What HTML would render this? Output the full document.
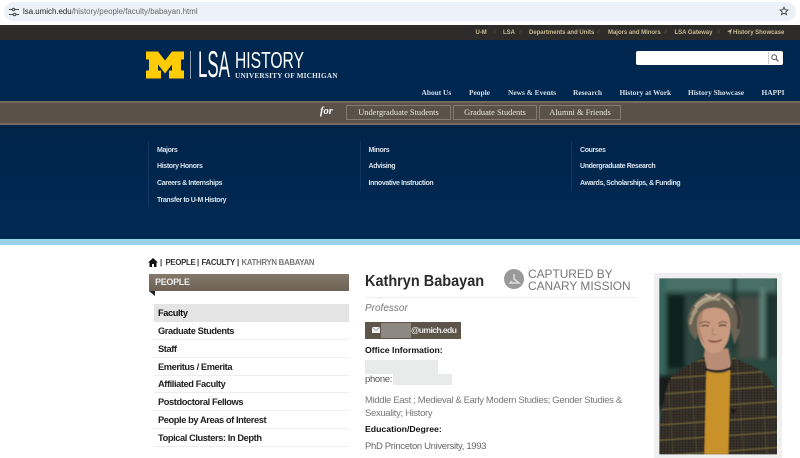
<!DOCTYPE html>
<html><head><meta charset="utf-8"><title>Kathryn Babayan</title>
<style>
html,body{margin:0;padding:0;background:#fff}
#p{position:relative;width:800px;height:458px;overflow:hidden;background:#fff;font-family:"Liberation Sans",sans-serif}
#p div,#p span.a,#p svg{position:absolute}
.t{white-space:nowrap;line-height:1}
.top{font-size:6px;font-weight:bold;color:#c9bb94;top:29.500px;letter-spacing:-.02px}
.sl{font-size:6px;color:#55534f;top:29.500px}
.nav{font-family:"Liberation Serif",serif;font-size:7.400px;font-weight:bold;color:#d5dde8;top:88.500px}
.btn{top:105px;height:15px;border:1px solid #857c6d;background:#5a5248;box-sizing:border-box;color:#e9e6df;font-family:"Liberation Serif",serif;font-size:8.400px;line-height:13px;text-align:center;white-space:nowrap}
.ml{font-size:7px;font-weight:bold;color:#d8e1ec;letter-spacing:-.36px}
.vl{width:1px;background:#12355f}
.side{left:154px;width:195px;height:17px;border-bottom:1px solid #eee;font-size:9.300px;font-weight:bold;color:#222;line-height:19px;text-indent:4px;white-space:nowrap;letter-spacing:-.42px}
.bc{top:259px;font-size:7.800px;font-weight:bold;color:#333;letter-spacing:-.28px}
.g{font-size:9.500px;letter-spacing:-.34px}
</style></head><body><div id="p">

<div style="left:0;top:0;width:800px;height:24px;background:#fff"></div>
<div style="left:4px;top:2px;width:792px;height:19px;border-radius:10px;background:#edf2fa"></div>
<svg style="left:8px;top:7px" width="12" height="10" viewBox="0 0 12 10"><path d="M1 2.500H4M7 2.500H11M1 7.500H5M8 7.500H11" stroke="#444" stroke-width="1"/><circle cx="5.500" cy="2.500" r="1.300" fill="none" stroke="#444"/><circle cx="6.500" cy="7.500" r="1.300" fill="none" stroke="#444"/></svg>
<div class="t" style="left:23px;top:7.500px;font-size:7.900px;color:#666"><span style="color:#222">lsa.umich.edu</span>/history/people/faculty/babayan.html</div>
<svg style="left:779px;top:6px" width="10" height="10" viewBox="0 0 24 24"><path d="M12 3l2.800 6 6.500.7-4.900 4.400 1.400 6.400L12 17.200 6.200 20.500l1.400-6.400L2.700 9.700 9.200 9z" fill="none" stroke="#444" stroke-width="2.200"/></svg>

<div style="left:0;top:25px;width:800px;height:15px;background:#2d2c2b"></div>
<div style="left:0;top:40px;width:800px;height:61px;background:#00274f"></div>

<div class="t top" style="left:475.500px">U-M</div><div class="t sl" style="left:493px">//</div>
<div class="t top" style="left:503px">LSA</div><div class="t sl" style="left:519px">//</div>
<div class="t top" style="left:529px">Departments and Units</div><div class="t sl" style="left:597px">//</div>
<div class="t top" style="left:608px">Majors and Minors</div><div class="t sl" style="left:664px">//</div>
<div class="t top" style="left:674.500px">LSA Gateway</div><div class="t sl" style="left:717px">//</div>
<svg style="left:727px;top:29px" width="5" height="6" viewBox="0 0 5 6"><path d="M0 2.500L5 0 3 6 2.500 3z" fill="#c9bb94"/></svg>
<div class="t top" style="left:733px">History Showcase</div>

<svg style="left:146px;top:51px" width="38" height="28" viewBox="0 0 38 27"><path d="M0 0H12L19 9 26 0H38V8H35V19H38V27H23V19H26V13L19 22 12 13V19H15V27H0V19H3V8H0Z" fill="#ffcb05"/></svg>
<div style="left:190px;top:51px;width:1px;height:28px;background:#8c9db3"></div>
<div class="t" style="left:197.500px;top:46.300px;font-size:37.500px;color:#fff;transform:scaleX(.45);transform-origin:0 0">LSA</div>
<div class="t" style="left:235px;top:49px;font-size:23px;color:#fff;transform:scaleX(.68);transform-origin:0 0">HISTORY</div>
<div class="t" style="left:235px;top:72px;font-family:'Liberation Serif',serif;font-size:7.300px;font-weight:bold;color:#dfe5ec;letter-spacing:.18px">UNIVERSITY OF MICHIGAN</div>

<div style="left:636px;top:51px;width:147px;height:14px;background:#fff;border-radius:2px"></div>
<div style="left:768px;top:52px;width:1px;height:12px;background:#ccc"></div>
<svg style="left:771px;top:54px" width="8" height="8" viewBox="0 0 8 8"><circle cx="3.200" cy="3.200" r="2.400" fill="none" stroke="#555" stroke-width="1"/><path d="M5 5L7.500 7.500" stroke="#555" stroke-width="1.200"/></svg>

<div class="t nav" style="left:421.500px">About Us</div>
<div class="t nav" style="left:469px">People</div>
<div class="t nav" style="left:508px">News &amp; Events</div>
<div class="t nav" style="left:573px">Research</div>
<div class="t nav" style="left:619.500px">History at Work</div>
<div class="t nav" style="left:688px">History Showcase</div>
<div class="t nav" style="left:761.500px">HAPPI</div>

<div style="left:0;top:101px;width:800px;height:24px;background:#5a5248;border-top:2px solid #736b5f;border-bottom:2px solid #736b5f;box-sizing:border-box"></div>
<div class="t" style="left:320px;top:106.500px;font-family:'Liberation Serif',serif;font-style:italic;font-weight:bold;font-size:10.500px;color:#fff">for</div>
<div class="btn" style="left:346px;width:105px">Undergraduate Students</div>
<div class="btn" style="left:453px;width:84px">Graduate Students</div>
<div class="btn" style="left:539px;width:82px">Alumni &amp; Friends</div>

<div style="left:0;top:125px;width:800px;height:114px;background:linear-gradient(#00234a,#00274f 50%,#002850)"></div>
<div class="vl" style="left:148px;top:141px;height:66px"></div>
<div class="vl" style="left:360px;top:141px;height:50px"></div>
<div class="vl" style="left:571px;top:141px;height:50px"></div>
<div class="t ml" style="left:157px;top:146.500px">Majors</div>
<div class="t ml" style="left:157px;top:163px">History Honors</div>
<div class="t ml" style="left:157px;top:180px">Careers &amp; Internships</div>
<div class="t ml" style="left:157px;top:196.500px">Transfer to U-M History</div>
<div class="t ml" style="left:368.500px;top:146.500px">Minors</div>
<div class="t ml" style="left:368.500px;top:163px">Advising</div>
<div class="t ml" style="left:368.500px;top:180px">Innovative Instruction</div>
<div class="t ml" style="left:580px;top:146.500px">Courses</div>
<div class="t ml" style="left:580px;top:163px">Undergraduate Research</div>
<div class="t ml" style="left:580px;top:180px">Awards, Scholarships, &amp; Funding</div>

<div style="left:0;top:239px;width:800px;height:6px;background:#98d4e9"></div>

<svg style="left:148px;top:258px" width="10" height="9" viewBox="0 0 10 9"><path d="M5 0L10 4.500H8.500V9H6V6H4V9H1.500V4.500H0Z" fill="#111"/></svg>
<div class="t bc" style="left:160px">|</div>
<div class="t bc" style="left:165.500px">PEOPLE</div>
<div class="t bc" style="left:197px">|</div>
<div class="t bc" style="left:201.500px">FACULTY</div>
<div class="t bc" style="left:237px">|</div>
<div class="t bc" style="left:241.500px;color:#777">KATHRYN BABAYAN</div>

<div style="left:149px;top:274px;width:200px;height:17px;background:linear-gradient(#85796b,#6b6154)"></div>
<svg style="left:149px;top:291px" width="6" height="5" viewBox="0 0 6 5"><path d="M0 0H6V5Z" fill="#222"/></svg>
<div class="t" style="left:155px;top:277.500px;font-size:9px;font-weight:bold;color:#eee;letter-spacing:-.3px">PEOPLE</div>

<div class="side" style="top:304px;height:18px;background:#e4e4e4;border:0;color:#111">Faculty</div>
<div class="side" style="top:322px">Graduate Students</div>
<div class="side" style="top:340px">Staff</div>
<div class="side" style="top:358px">Emeritus / Emerita</div>
<div class="side" style="top:375px">Affiliated Faculty</div>
<div class="side" style="top:393px">Postdoctoral Fellows</div>
<div class="side" style="top:411px">People by Areas of Interest</div>
<div class="side" style="top:429px">Topical Clusters: In Depth</div>

<div class="t" style="left:365px;top:274px;font-size:16px;font-weight:bold;color:#2b2b2b;transform:scaleX(.905);transform-origin:0 0">Kathryn Babayan</div>
<svg style="left:504px;top:269px" width="20" height="20" viewBox="0 0 20 20"><circle cx="10" cy="10" r="10" fill="#999"/><path d="M10 5V10L15 14H6L8 12" fill="none" stroke="#ddd" stroke-width="1.500"/></svg>
<div class="t" style="left:528px;top:267.500px;font-size:11.900px;line-height:12.200px;color:#777">CAPTURED BY<br>CANARY MISSION</div>
<div style="left:365px;top:297px;width:272px;height:1px;background:#eee"></div>
<div class="t" style="left:365px;top:304px;font-size:10px;font-style:italic;color:#777">Professor</div>

<div style="left:365px;top:322px;width:96px;height:17px;background:#5e554a"></div>
<svg style="left:372px;top:327px" width="8" height="6" viewBox="0 0 8 6"><rect width="8" height="6" fill="#eee"/><path d="M0 0L4 3.500 8 0" fill="none" stroke="#888" stroke-width=".6"/></svg>
<div style="left:381px;top:323px;width:30px;height:15px;background:#8d8982"></div>
<div class="t" style="left:411px;top:326px;font-size:8.600px;font-weight:bold;color:#e8e6e2;letter-spacing:-.6px">@umich.edu</div>

<div class="t" style="left:365px;top:346px;font-size:8.700px;font-weight:bold;color:#111">Office Information:</div>
<div style="left:365px;top:360px;width:73px;height:14px;background:#e9eaea"></div>
<div style="left:393px;top:374px;width:59px;height:11px;background:#e9eaea"></div>
<div class="t g" style="left:365px;top:375px;color:#555">phone:</div>
<div class="t g" style="left:365px;top:394px;line-height:13px;color:#777;width:258px;white-space:normal">Middle East ; Medieval &amp; Early Modern Studies; Gender Studies &amp; Sexuality; History</div>
<div class="t" style="left:365px;top:425px;font-size:8.700px;font-weight:bold;color:#111">Education/Degree:</div>
<div class="t g" style="left:365px;top:442px;color:#666">PhD Princeton University, 1993</div>

<div style="left:654px;top:273px;width:128px;height:185px;background:#efefef"></div>
<svg style="left:645px;top:265px" width="155" height="193" viewBox="0 0 465 579">
<defs>
<filter id="b"><feGaussianBlur stdDeviation="6"/></filter>
<filter id="s"><feGaussianBlur stdDeviation="2.500"/></filter>
<filter id="f"><feGaussianBlur stdDeviation="1.500"/></filter>
<clipPath id="c"><rect x="43" y="40" width="353" height="528"/></clipPath>
<pattern id="tw" width="18" height="16" patternUnits="userSpaceOnUse"><rect width="18" height="16" fill="#302b28"/><path d="M0 4H18M0 12H18" stroke="#524938" stroke-width="2"/><path d="M5 0V16M14 0V16" stroke="#1f1b19" stroke-width="2.500"/></pattern>
<pattern id="tw2" width="70" height="46" patternUnits="userSpaceOnUse" patternTransform="rotate(-4)"><path d="M0 22H70" stroke="#8f7f38" stroke-width="3" opacity=".8"/><path d="M45 0V46" stroke="#75673a" stroke-width="2" opacity=".5"/></pattern>
</defs>
<g clip-path="url(#c)">
<rect x="43" y="40" width="353" height="528" fill="#2a453f"/>
<g filter="url(#b)">
<rect x="43" y="35" width="353" height="45" fill="#4a7067"/>
<rect x="66" y="90" width="54" height="220" fill="#11201d"/>
<rect x="120" y="95" width="40" height="200" fill="#2e4a42"/>
<rect x="262" y="35" width="12" height="220" fill="#16302b"/>
<rect x="280" y="95" width="66" height="190" fill="#474c44"/>
<rect x="345" y="70" width="15" height="240" fill="#5f857b"/>
<rect x="362" y="90" width="36" height="230" fill="#1d332e"/>
<rect x="38" y="40" width="24" height="300" fill="#38675f"/>
<rect x="38" y="330" width="45" height="100" fill="#161f1d"/>
<rect x="280" y="280" width="120" height="40" fill="#2b4a42"/>
</g>
<g filter="url(#s)">
<path d="M180 250H250L262 320H170Z" fill="#b98d75"/>
<path d="M132 190C120 150 145 100 190 85 240 72 285 110 290 160 292 190 280 215 268 240L255 190 165 200 152 225C143 215 136 205 132 190Z" fill="#6b6252"/>
</g>
<g filter="url(#f)">
<path d="M142 150C160 108 205 95 225 105" fill="none" stroke="#a79b7f" stroke-width="9"/>
<path d="M150 125C165 105 180 100 195 98M215 92C235 95 250 110 262 128" fill="none" stroke="#b8ad92" stroke-width="6"/>
<path d="M170 100C195 85 235 92 255 108" fill="none" stroke="#85796a" stroke-width="5"/>
<path d="M180 88L205 100 225 85" fill="none" stroke="#c2b69b" stroke-width="5"/>
<path d="M136 178C138 158 146 148 156 136" fill="none" stroke="#a5977a" stroke-width="8"/>
<path d="M268 118C282 138 286 165 280 192" fill="none" stroke="#46403a" stroke-width="11"/>
<path d="M156 180C155 142 175 128 210 128 245 130 258 150 256 190 255 230 235 265 205 265 178 265 158 225 156 180Z" fill="#c99a80"/>
<path d="M156 180C155 160 162 145 175 135L165 195 180 240C166 225 157 205 156 180Z" fill="#ae846c"/>
<path d="M165 176C175 168 188 168 195 176M220 176C228 168 240 168 246 175" fill="none" stroke="#6b5040" stroke-width="3"/>
<path d="M170 184C176 180 186 180 191 184M222 183C228 179 238 179 243 183" fill="none" stroke="#2f2420" stroke-width="3.500"/>
<path d="M205 188L202 208 214 210" fill="none" stroke="#a87b64" stroke-width="3"/>
<path d="M190 226C205 233 218 231 230 224" fill="none" stroke="#8d4a42" stroke-width="5"/>
</g>
<g filter="url(#f)">
<path d="M42 568C45 440 60 340 95 320 125 300 160 290 178 275L185 310 186 568ZM396 568V390C385 340 350 310 300 295 285 285 268 280 262 275L255 312 250 568Z" fill="url(#tw)"/>
<path d="M42 568C45 440 60 340 95 320 125 300 160 290 178 275L185 310 186 568ZM396 568V390C385 340 350 310 300 295 285 285 268 280 262 275L255 312 250 568Z" fill="url(#tw2)"/>
<path d="M184 318C205 326 235 326 256 316L250 568H178Z" fill="#c8912a"/>
<path d="M180 312C205 322 235 322 260 308" fill="none" stroke="#1e1a1d" stroke-width="6"/>
<circle cx="265" cy="438" r="7" fill="#1d1a18"/>
</g>
</g>
</svg>
</div></body></html>
